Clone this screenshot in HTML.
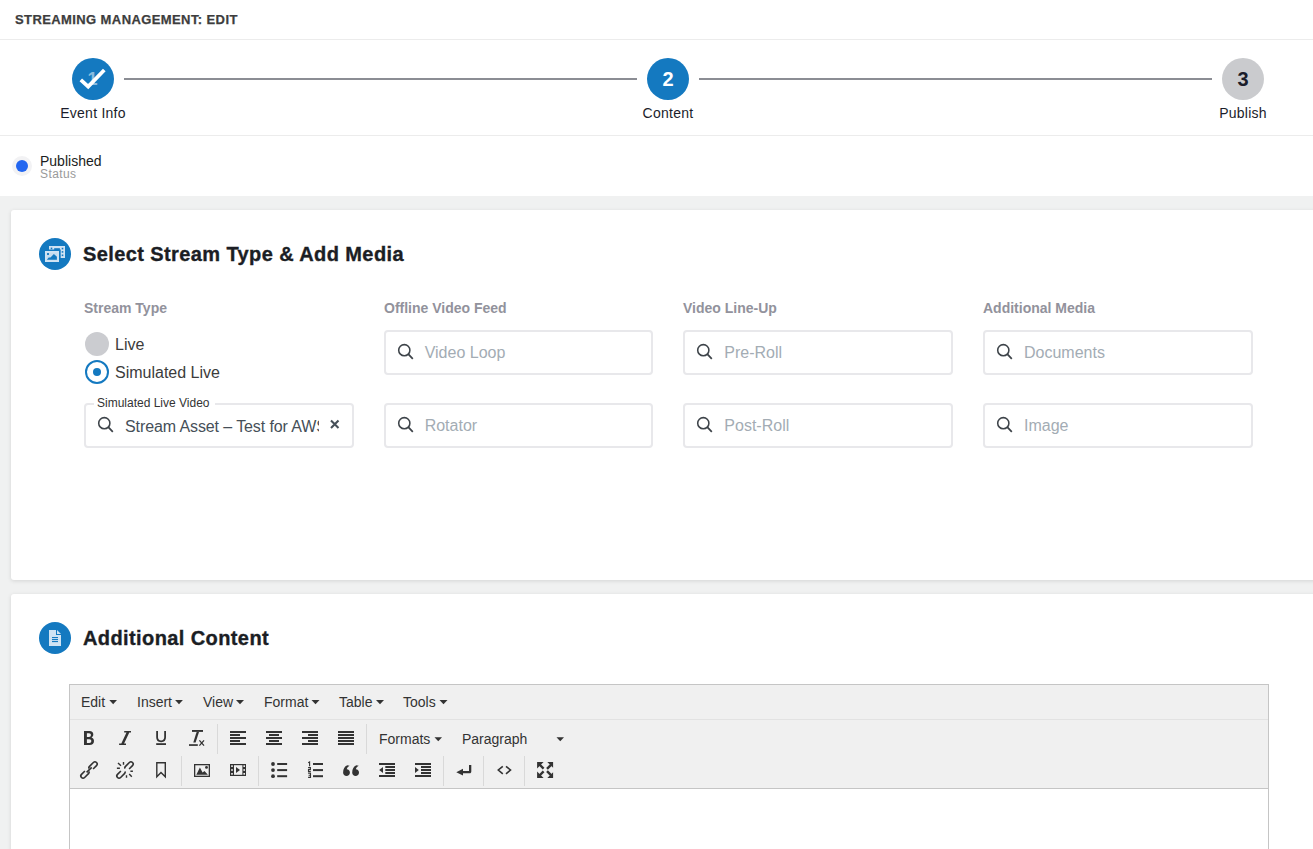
<!DOCTYPE html>
<html><head><meta charset="utf-8">
<style>
*{box-sizing:border-box;margin:0;padding:0}
html,body{width:1313px;height:849px;overflow:hidden;background:#f0f1f1;font-family:"Liberation Sans",sans-serif}
.abs{position:absolute;white-space:nowrap}
#top{position:absolute;left:0;top:0;width:1313px;height:196px;background:#fff}
.hline{position:absolute;left:0;width:1313px;height:1px;background:#ececec}
.step{position:absolute;width:42px;height:42px;border-radius:50%;top:58px}
.stepline{position:absolute;top:78px;height:2px;background:#8b8d94}
.steplbl{position:absolute;top:104px;font-size:14px;line-height:18px;color:#1b1d2b;text-align:center;width:120px;letter-spacing:.25px}
.card{position:absolute;left:11px;width:1340px;background:#fff;border-radius:3px;box-shadow:0 1px 4px rgba(0,0,0,.12)}
.ico{position:absolute;width:32px;height:32px;border-radius:50%;background:#1479c0}
.ttl{position:absolute;font-weight:bold;font-size:20px;line-height:24px;color:#1b1e24;letter-spacing:.4px;white-space:nowrap;-webkit-text-stroke:.35px #1b1e24}
.lbl{position:absolute;margin-top:1px;font-weight:bold;font-size:14px;line-height:16px;color:#92929c;white-space:nowrap}
.inp{position:absolute;width:269.67px;height:45px;border:2px solid #e8e8eb;border-radius:4px;background:#fff}
.ph{position:absolute;left:39px;top:12px;font-size:16px;line-height:18px;color:#a3acb4;white-space:nowrap}
.mb{position:absolute;top:694.3px;font-size:14px;line-height:16px;color:#333;white-space:nowrap}
</style></head><body>
<div id="top">
  <div class="abs" style="left:15px;top:12px;font-size:13px;line-height:15px;font-weight:bold;color:#3d3d3d;letter-spacing:.4px;-webkit-text-stroke:.25px #3d3d3d">STREAMING MANAGEMENT: EDIT</div>
  <div class="hline" style="top:39px"></div>
  <!-- stepper -->
  <div class="stepline" style="left:124px;width:513px"></div>
  <div class="stepline" style="left:699px;width:513px"></div>
  <div class="step" style="left:72px;background:#1479c0"></div>
  <div class="step" style="left:647px;background:#1479c0"></div>
  <div class="step" style="left:1222px;background:#cacbce"></div>
  <div class="abs" style="left:647px;top:58px;width:42px;height:42px;text-align:center;font-weight:bold;font-size:20px;line-height:42px;color:#fff">2</div>
  <div class="abs" style="left:1222px;top:58px;width:42px;height:42px;text-align:center;font-weight:bold;font-size:20px;line-height:42px;color:#1b1d2b">3</div>
  <div class="abs" style="left:72px;top:58px;width:42px;height:42px;text-align:center;font-weight:bold;font-size:18px;line-height:42px;color:rgba(255,255,255,.5);text-indent:-1px">1</div>
  <svg class="abs" style="left:0;top:0" width="200" height="140"><path d="M80.8 79.8 L88.2 86.6 L104.3 70" fill="none" stroke="#fff" stroke-width="3.7"/></svg>
  <div class="steplbl" style="left:33px">Event Info</div>
  <div class="steplbl" style="left:608px">Content</div>
  <div class="steplbl" style="left:1183px">Publish</div>
  <div class="hline" style="top:135px"></div>
  <!-- status -->
  <div class="abs" style="left:12px;top:156px;width:20px;height:20px;border-radius:50%;background:#f2f2f4"></div>
  <div class="abs" style="left:16px;top:160px;width:12px;height:12px;border-radius:50%;background:#2266f0"></div>
  <div class="abs" style="left:40px;top:153px;font-size:14px;line-height:16px;color:#1b1d21">Published</div>
  <div class="abs" style="left:40px;top:168px;font-size:12px;line-height:13px;color:#9a9a9a;letter-spacing:.4px">Status</div>
</div>

<div class="card" style="top:210px;height:370px"></div>
<div class="card" style="top:594px;height:300px"></div>

<!-- card 1 -->
<div class="ico" style="left:39px;top:238px"></div>
<svg class="abs" style="left:0;top:0" width="120" height="300" viewBox="0 0 120 300">
  <g fill="#d0e3f3">
    <rect x="49" y="246" width="16" height="12"/>
  </g>
  <rect x="54.2" y="248.2" width="5.7" height="10" fill="#1479c0"/>
  <g fill="#1479c0">
    <rect x="61.7" y="247.8" width="1.6" height="1.6"/><rect x="61.7" y="251.1" width="1.6" height="1.6"/><rect x="61.7" y="254.5" width="1.6" height="1.6"/>
    <rect x="50.7" y="247.6" width="1.6" height="1.6"/>
    <rect x="43.3" y="249.5" width="17.4" height="14"/>
  </g>
  <rect x="45" y="251" width="14" height="11" fill="#d0e3f3"/>
  <rect x="46.8" y="252.8" width="10.4" height="7.4" fill="#c6dcef"/>
  <rect x="47" y="253.1" width="2" height="1.8" fill="#1479c0"/>
  <path d="M46.9 259.8 L48.7 257.5 H50.5 L53.9 254.1 L56.9 256.8 V259.8 Z" fill="#1479c0"/>
</svg>
<div class="ttl" style="left:83px;top:242px">Select Stream Type &amp; Add Media</div>
<div class="lbl" style="left:84px;top:299px">Stream Type</div>
<div class="lbl" style="left:384px;top:299px">Offline Video Feed</div>
<div class="lbl" style="left:683px;top:299px">Video Line-Up</div>
<div class="lbl" style="left:983px;top:299px">Additional Media</div>

<!-- radios -->
<div class="abs" style="left:85px;top:332px;width:24px;height:24px;border-radius:50%;background:#cbccd0"></div>
<div class="abs" style="left:115px;top:336px;font-size:16px;line-height:18px;color:#3c3c3c">Live</div>
<div class="abs" style="left:85px;top:360px;width:24px;height:24px;border-radius:50%;border:2.7px solid #1479c0;background:#fff"></div>
<div class="abs" style="left:93px;top:368px;width:8px;height:8px;border-radius:50%;background:#1479c0"></div>
<div class="abs" style="left:115px;top:364px;font-size:16px;line-height:18px;color:#3c3c3c">Simulated Live</div>

<!-- simulated field -->
<div class="inp" style="left:84px;top:403px"></div>
<div class="abs" style="left:94px;top:396px;width:121px;height:10px;background:#fff"></div>
<div class="abs" style="left:97px;top:397px;font-size:12px;line-height:13px;color:#333">Simulated Live Video</div>
<div class="abs" style="left:125px;top:417.5px;width:194px;overflow:hidden;font-size:16px;line-height:18px;color:#464f58;letter-spacing:-.1px">Stream Asset &ndash; Test for AWS Stream</div>

<div class="inp" style="left:383.67px;top:330px"><div class="ph">Video Loop</div></div>
<div class="inp" style="left:383.67px;top:403px"><div class="ph">Rotator</div></div>
<div class="inp" style="left:683.33px;top:330px"><div class="ph">Pre-Roll</div></div>
<div class="inp" style="left:683.33px;top:403px"><div class="ph">Post-Roll</div></div>
<div class="inp" style="left:983px;top:330px"><div class="ph">Documents</div></div>
<div class="inp" style="left:983px;top:403px"><div class="ph">Image</div></div>

<svg class="abs" style="left:0;top:0" width="1313" height="849" viewBox="0 0 1313 849">
  <defs>
    <g id="srch"><circle cx="6.3" cy="6.2" r="5.6" fill="none" stroke="#3d4349" stroke-width="1.55"/><path d="M10.3 10.2 L14.8 14.8" stroke="#3d4349" stroke-width="1.8" stroke-linecap="butt"/></g>
  </defs>
  <use href="#srch" x="98" y="417"/>
  <use href="#srch" x="398" y="344"/>
  <use href="#srch" x="398" y="417"/>
  <use href="#srch" x="697" y="344"/>
  <use href="#srch" x="697" y="417"/>
  <use href="#srch" x="997" y="344"/>
  <use href="#srch" x="997" y="417"/>
  <path d="M331 420.5 L338.5 428 M338.5 420.5 L331 428" stroke="#464f58" stroke-width="2.1"/>
</svg>

<!-- card 2 -->
<div class="ico" style="left:39px;top:622px"></div>
<svg class="abs" style="left:0;top:0" width="120" height="700" viewBox="0 0 120 700">
  <path d="M49 630 H56 V635 H61 V646 H49 Z" fill="#d0e3f3"/>
  <path d="M57 630 L61 634 H57 Z" fill="#d0e3f3"/>
  <g fill="#1479c0"><rect x="52" y="637" width="6" height="1.1"/><rect x="52" y="639" width="6" height="1.1"/><rect x="52" y="641" width="6" height="1.1"/></g>
</svg>
<div class="ttl" style="left:83px;top:626px">Additional Content</div>

<!-- editor -->
<div class="abs" style="left:69px;top:684px;width:1200px;height:200px;border:1px solid #c5c5c5;background:#fff"></div>
<div class="abs" style="left:70px;top:685px;width:1198px;height:103px;background:#f0f0f0"></div>
<div class="abs" style="left:70px;top:719px;width:1198px;height:1px;background:#e2e2e2"></div>
<div class="abs" style="left:70px;top:788px;width:1198px;height:1px;background:#c5c5c5"></div>

<div class="mb" style="left:81px">Edit</div>
<div class="mb" style="left:137px">Insert</div>
<div class="mb" style="left:203px">View</div>
<div class="mb" style="left:264px">Format</div>
<div class="mb" style="left:339px">Table</div>
<div class="mb" style="left:403px">Tools</div>
<div class="mb" style="left:379px;top:731px">Formats</div>
<div class="mb" style="left:462px;top:731px">Paragraph</div>


<svg class="abs" style="left:0;top:0" width="1313" height="849" viewBox="0 0 1313 849">
 <g fill="#333">
  <!-- menubar carets -->
  <path d="M109.3 700 H117 L113.15 704.2 Z"/>
  <path d="M175.1 700 H182.9 L179 704.2 Z"/>
  <path d="M236 700 H244 L240 704.2 Z"/>
  <path d="M311.5 700 H319.5 L315.5 704.2 Z"/>
  <path d="M376 700 H384 L380 704.2 Z"/>
  <path d="M439.5 700 H447.5 L443.5 704.2 Z"/>
  <path d="M434.5 737.3 H442 L438.25 741.3 Z"/>
  <path d="M556.5 737.3 H564 L560.25 741.3 Z"/>
  <!-- B -->
  <path fill-rule="evenodd" d="M84 731 H89.5 C92 731 93.3 732.3 93.3 734.4 C93.3 735.8 92.6 736.9 91.5 737.4 C93 737.9 94 739.1 94 740.9 C94 743.4 92.3 745 89.6 745 H84 Z M86.9 733.2 V737.1 H89 C90.3 737.1 90.9 736.4 90.9 735.1 C90.9 733.9 90.3 733.2 89 733.2 Z M86.9 739.2 V743 H89.3 C90.7 743 91.3 742.3 91.3 741.1 C91.3 739.9 90.7 739.2 89.3 739.2 Z"/>
  <!-- I -->
  <path d="M124.2 731 H131 V732.6 H129.3 L124.1 743.4 H126 V745 H119.1 V743.4 H121.3 L126.5 732.6 H124.2 Z"/>
  <!-- U -->
  <path d="M157.1 731 V737.3 C157.1 739.8 158.8 741.3 161.1 741.3 C163.4 741.3 165.1 739.8 165.1 737.3 V731" fill="none" stroke="#333" stroke-width="1.8"/>
  <rect x="156.2" y="743.2" width="9.8" height="1.8"/>
  <!-- Tx -->
  <rect x="192" y="730" width="11" height="1.9"/>
  <path d="M196.6 731.9 H199 L195.6 742.6 H193.3 Z"/>
  <rect x="189" y="744.2" width="8.8" height="1.7"/>
  <path d="M199.4 740.4 L204 745.6 M204 740.4 L199.4 745.6" stroke="#333" stroke-width="1.3"/>
  <!-- align left -->
  <rect x="230" y="731" width="16" height="2"/><rect x="230" y="734" width="10" height="2"/><rect x="230" y="737" width="16" height="2"/><rect x="230" y="740" width="10" height="2"/><rect x="230" y="743" width="16" height="2"/>
  <!-- align center -->
  <rect x="266" y="731" width="16" height="2"/><rect x="269" y="734" width="10" height="2"/><rect x="266" y="737" width="16" height="2"/><rect x="269" y="740" width="10" height="2"/><rect x="266" y="743" width="16" height="2"/>
  <!-- align right -->
  <rect x="302" y="731" width="16" height="2"/><rect x="308" y="734" width="10" height="2"/><rect x="302" y="737" width="16" height="2"/><rect x="308" y="740" width="10" height="2"/><rect x="302" y="743" width="16" height="2"/>
  <!-- justify -->
  <rect x="338" y="731" width="16" height="2"/><rect x="338" y="734" width="16" height="2"/><rect x="338" y="737" width="16" height="2"/><rect x="338" y="740" width="16" height="2"/><rect x="338" y="743" width="16" height="2"/>
 </g>
 <g fill="#d9d9d9">
  <rect x="217" y="724" width="1" height="30"/>
  <rect x="366" y="724" width="1" height="30"/>
  <rect x="181" y="756" width="1" height="30"/>
  <rect x="258" y="756" width="1" height="30"/>
  <rect x="443" y="756" width="1" height="30"/>
  <rect x="483" y="756" width="1" height="30"/>
  <rect x="524" y="756" width="1" height="30"/>
 </g>
 <g fill="none" stroke="#333" stroke-width="1.6">
  <!-- link -->
  <g transform="translate(89 770) rotate(-45)">
   <path d="M3.6 2.2 H8.4 A2.2 2.2 0 0 0 8.4 -2.2 H2.6 Q1.4 -2.2 1.2 -0.9"/>
   <path d="M-3.6 -2.2 H-8.4 A2.2 2.2 0 0 0 -8.4 2.2 H-2.6 Q-1.4 2.2 -1.2 0.9"/>
   <path d="M-3.4 0 H3.8"/>
  </g>
  <!-- unlink -->
  <g transform="translate(125 770) rotate(-45)">
   <path d="M3.6 2.2 H8.4 A2.2 2.2 0 0 0 8.4 -2.2 H2.6 Q1.4 -2.2 1.2 -0.9"/>
   <path d="M-3.6 -2.2 H-8.4 A2.2 2.2 0 0 0 -8.4 2.2 H-2.6 Q-1.4 2.2 -1.2 0.9"/>
  </g>
  <path d="M118 762.9 L121 765.8 M123.5 762 V764.7 M116.9 768.3 H119.9 M130.4 771.3 H132.9 M129.2 774 L131.8 776.8 M126.5 775.2 V777.7" stroke-width="1.4"/>
  <!-- anchor -->
  <path d="M156.8 762.7 H165.3 V776.8 L161 772.4 L156.8 776.8 Z" stroke-width="1.4"/>
  <!-- image frame -->
  <rect x="194.65" y="764.65" width="14.7" height="11.7" stroke-width="1.3"/>
  <!-- code -->
  <path d="M502.8 766.3 L498.3 770 L502.8 773.8 M506 766.3 L510.5 770 L506 773.8"/>
 </g>
 <g fill="#333">
  <path d="M196.3 774.8 L199.9 767.4 L202.6 772.4 L204.5 770.9 L207.9 774.8 Z"/>
  <circle cx="206.5" cy="767.4" r="1.4"/>
  <!-- media -->
  <rect x="230" y="764" width="16" height="12"/>
  <rect x="234" y="765.2" width="8.4" height="9.6" fill="#f0f0f0"/>
  <g fill="#f0f0f0">
   <rect x="231.2" y="765.3" width="1.6" height="1.7"/><rect x="231.2" y="769.15" width="1.6" height="1.7"/><rect x="231.2" y="773" width="1.6" height="1.7"/>
   <rect x="243.4" y="765.3" width="1.6" height="1.7"/><rect x="243.4" y="769.15" width="1.6" height="1.7"/><rect x="243.4" y="773" width="1.6" height="1.7"/>
  </g>
  <path d="M236 767 L240 770 L236 772.9 Z"/>
  <!-- bullist -->
  <circle cx="273" cy="764" r="1.9"/><circle cx="273" cy="770.1" r="1.9"/><circle cx="273" cy="776.2" r="1.9"/>
  <rect x="277.2" y="763" width="9.9" height="2"/><rect x="277.2" y="769.1" width="9.9" height="2"/><rect x="277.2" y="775.2" width="9.9" height="2"/>
  <!-- numlist -->
  <rect x="313" y="763" width="10" height="2"/><rect x="313" y="769.1" width="10" height="2"/><rect x="313" y="775.2" width="10" height="2"/>
  <!-- blockquote -->
  <path d="M347.3 765.2 C344.6 766.3 343.1 768.8 343.1 772.5 C343.1 774.6 344.6 776 346.5 776 C348.4 776 349.9 774.6 349.9 772.6 C349.9 770.8 348.6 769.3 346.8 769.2 C347 767.8 348 766.6 349.6 765.8 Z"/>
  <path d="M356.4 765.2 C353.7 766.3 352.2 768.8 352.2 772.5 C352.2 774.6 353.7 776 355.6 776 C357.5 776 359 774.6 359 772.6 C359 770.8 357.7 769.3 355.9 769.2 C356.1 767.8 357.1 766.6 358.7 765.8 Z"/>
  <!-- outdent -->
  <rect x="379" y="763" width="16" height="2"/><rect x="385.3" y="766" width="9.7" height="2"/><rect x="385.3" y="769" width="9.7" height="2"/><rect x="385.3" y="772" width="9.7" height="2"/><rect x="379" y="775" width="16" height="2"/>
  <path d="M379.2 770 L383 767 V773 Z"/>
  <!-- indent -->
  <rect x="415" y="763" width="16" height="2"/><rect x="421" y="766" width="10" height="2"/><rect x="421" y="769" width="10" height="2"/><rect x="421" y="772" width="10" height="2"/><rect x="415" y="775" width="16" height="2"/>
  <path d="M415 767 L418.8 770 L415 773 Z"/>
  <!-- enter -->
  <path d="M456.3 772.2 L463 768.8 V775.6 Z"/>
  <path d="M462 771 H469 V765.1 H471.3 V771.5 C471.3 772.6 470.7 773.3 469.6 773.3 H462 Z"/>
  <!-- fullscreen -->
  <path d="M537.1 762 H543.6 L537.1 768.5 Z M553.1 762 H547.3 L553.1 767.8 Z M537.1 778 H543.6 L537.1 771.5 Z M553.1 778 H547.3 L553.1 772.2 Z"/>
 </g>
 <g stroke="#333" stroke-width="2.4">
  <path d="M539.5 764.5 L543.6 768.6 M551 764.8 L547 768.8 M539.5 775.5 L543.6 771.4 M551 775.2 L547 771.2"/>
 </g>
 <g fill="none" stroke="#333" stroke-width="1.1">
  <path d="M308.2 762.8 L309.6 762 V766.2 M308.1 767.6 H310.4 V769.6 H308.5 V771.6 H310.8 M308.1 773.2 H310.5 V777.4 H308.1 M308.6 775.3 H310.5"/>
 </g>
</svg>
</body></html>
